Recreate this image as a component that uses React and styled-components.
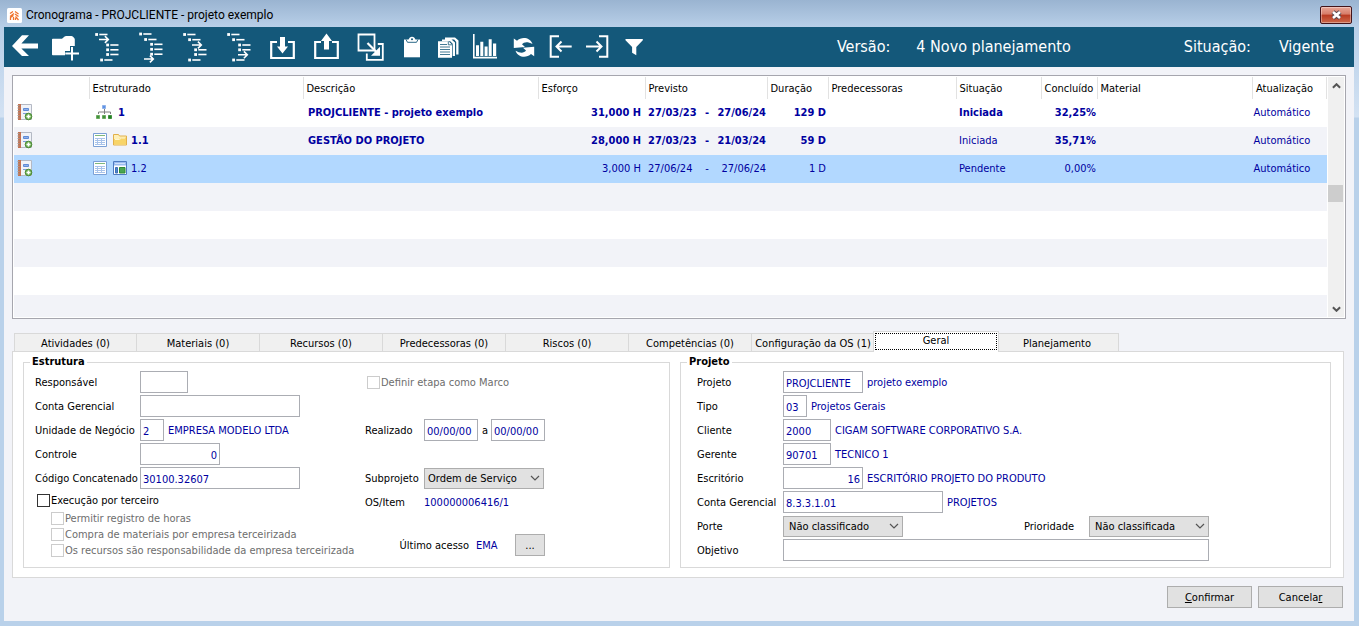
import React from 'react';
import styled, { createGlobalStyle, ThemeProvider } from 'styled-components';

const theme = {
  colors: {
    frame: '#b9d1ea',
    toolbar: '#14587a',
    surface: '#f2f3f8',
    white: '#ffffff',
    black: '#000000',
    value: '#0000a0',
    selected: '#b2d8ff',
    control: '#e1e1e1',
    border: '#adadad',
    line: '#d9d9d9',
    disabled: '#6d6d6d',
  },
};

const GlobalStyle = createGlobalStyle`
  * {
    box-sizing: border-box;
  }
  body {
    margin: 0;
    font-family: 'DejaVu Sans Condensed', 'DejaVu Sans', sans-serif;
    font-size: 11px;
    line-height: 14px;
    color: #000000;
  }
  button, input, select {
    font: inherit;
    color: inherit;
    margin: 0;
  }
`;

const Window = styled.div`
  display: flex;
  flex-direction: column;
  min-height: 100vh;
  padding: 0 5px 5px 4px;
  background: linear-gradient(#9ab4d1 0, #b8cfe8 27px, #d3e2f3 117px, ${({ theme }) => theme.colors.frame} 118px);
`;

const TitleBar = styled.header`
  display: flex;
  align-items: center;
  height: 27px;
  padding: 3px 0 0 3px;
  gap: 4px;
`;

const Title = styled.h1`
  flex: 1;
  margin: 0;
  font-family: Roboto, 'Open Sans', sans-serif;
  font-size: 12px;
  font-weight: normal;
`;

const CloseButton = styled.button`
  display: flex;
  align-items: center;
  justify-content: center;
  width: 32px;
  height: 18px;
  margin-right: 2px;
  padding: 0;
  border: 1px solid #43141a;
  border-radius: 2px;
  background: linear-gradient(#e9a798 0, #d67c68 45%, #b93a21 50%, #cc6a4c 100%);
  box-shadow: inset 0 0 0 1px rgba(255, 255, 255, 0.35);
`;

const Toolbar = styled.nav`
  display: flex;
  align-items: center;
  height: 40px;
  padding: 0 20px 0 5px;
  background-color: ${({ theme }) => theme.colors.toolbar};
  color: ${({ theme }) => theme.colors.white};
`;

const ToolButton = styled.button`
  flex: none;
  width: ${({ $width }) => $width}px;
  height: 40px;
  padding: 0;
  border: none;
  background: transparent;
  cursor: pointer;
  &:hover {
    opacity: 0.8;
  }
  svg {
    display: block;
  }
`;

const Status = styled.dl`
  display: flex;
  align-items: center;
  gap: ${({ $gap }) => $gap}px;
  margin: 0 0 0 ${({ $push }) => $push};
  font-size: 16px;
  line-height: 20px;
  white-space: nowrap;
  dt, dd {
    margin: 0;
  }
`;

const Body = styled.main`
  display: flex;
  flex-direction: column;
  flex: 1;
  padding: 8px 8px 13px;
  background-color: ${({ theme }) => theme.colors.surface};
`;

const GridBox = styled.section`
  display: flex;
  flex: 1 0 0;
  min-height: 200px;
  padding: 1px;
  gap: 1px;
  overflow: hidden;
  border: 1px solid #a6a6ae;
  background-color: ${({ theme }) => theme.colors.white};
`;

const GridScroll = styled.div`
  flex: 1;
  height: 0;
  min-height: 100%;
  overflow: hidden;
`;

const Table = styled.table`
  width: 100%;
  table-layout: fixed;
  border-collapse: collapse;
  white-space: nowrap;
`;

const HeadCell = styled.th`
  height: 22px;
  padding: 2px 0 0 3px;
  border-right: 1px solid #e2e2e2;
  font-weight: normal;
  text-align: left;
`;

const BodyRow = styled.tr`
  height: 28px;
  color: ${({ theme }) => theme.colors.value};
  font-weight: ${({ $bold }) => ($bold ? 'bold' : 'normal')};
  background-color: ${({ theme, $selected, $striped }) =>
    $selected ? theme.colors.selected : $striped ? theme.colors.surface : theme.colors.white};
`;

const Cell = styled.td`
  padding: 0 ${({ $right }) => $right || 0}px 0 ${({ $left }) => $left || 0}px;
  text-align: ${({ $align }) => $align || 'left'};
  font-weight: ${({ $plain }) => ($plain ? 'normal' : 'inherit')};
  svg {
    display: block;
    margin-bottom: 2px;
  }
`;

const Structure = styled.div`
  display: flex;
  align-items: center;
  gap: 4px;
  padding-left: ${({ $root }) => ($root ? 7 : 4)}px;
`;

const Period = styled.div`
  display: flex;
  justify-content: space-between;
`;

const ScrollTrack = styled.div`
  display: flex;
  flex-direction: column;
  width: 16px;
  background-color: #f0f0f0;
`;

const ScrollButton = styled.button`
  display: flex;
  align-items: center;
  justify-content: center;
  height: 17px;
  padding: 0;
  border: none;
  background: transparent;
`;

const ScrollSpace = styled.div`
  flex: ${({ $share }) => $share};
`;

const ScrollThumb = styled.div`
  height: 17px;
  margin-right: 1px;
  background-color: #cdcdcd;
`;

const TabList = styled.div`
  display: flex;
  align-items: flex-end;
  height: 20px;
  margin-top: 12px;
  padding-left: 2px;
`;

const Tab = styled.button`
  width: 123px;
  height: 18px;
  padding: 2px 0 0;
  border: 1px solid ${({ theme }) => theme.colors.line};
  border-width: 1px 1px 0 0;
  background-color: #f0f0f0;
  white-space: nowrap;
  line-height: 14px;
  &:first-child {
    border-left-width: 1px;
  }
  &[aria-selected='true'] {
    position: relative;
    width: 126px;
    height: 21px;
    margin: 0 -3px -1px -2px;
    padding: 1px 1px 2px;
    border-left-width: 1px;
    background-color: ${({ theme }) => theme.colors.white};
  }
  &[aria-selected='true'] span {
    display: block;
    height: 17px;
    border: 1px dotted #000000;
  }
`;

const Panel = styled.section`
  display: grid;
  grid-template-columns: 647fr 651fr;
  gap: 10px;
  margin-right: 2px;
  padding: 3px 12px 9px 10px;
  border: 1px solid ${({ theme }) => theme.colors.line};
  background-color: ${({ theme }) => theme.colors.white};
`;

const Group = styled.fieldset`
  display: flex;
  min-width: 0;
  min-height: 213px;
  margin: 0;
  padding: 1px 11px 0 ${({ $indent }) => $indent}px;
  border: 1px solid ${({ theme }) => theme.colors.line};
  legend {
    margin-left: ${({ $indent }) => 6 - $indent}px;
    padding: 0 2px;
    font-weight: bold;
  }
`;

const Column = styled.div`
  display: flex;
  flex-direction: column;
  flex: none;
  width: ${({ $width }) => $width}px;
`;

const Row = styled.div`
  display: flex;
  align-items: center;
  height: 24px;
  margin-top: ${({ $space }) => $space || 0}px;
  white-space: nowrap;
`;

const Label = styled.label`
  flex: none;
  width: ${({ $width }) => ($width ? `${$width}px` : 'auto')};
  padding-top: 2px;
`;

const Value = styled.output`
  min-width: ${({ $width }) => $width || 0}px;
  padding-top: 2px;
  color: ${({ theme }) => theme.colors.value};
`;

const TextInput = styled.input`
  width: ${({ $width }) => $width}px;
  height: 22px;
  padding: 2px 2px 0;
  border: 1px solid #abadb3;
  background-color: ${({ theme }) => theme.colors.white};
  color: ${({ theme }) => theme.colors.value};
  text-align: ${({ $align }) => $align || 'left'};
  & + output, & + label {
    margin-left: 4px;
  }
`;

const SelectBox = styled.div`
  position: relative;
  width: 120px;
  svg {
    position: absolute;
    top: 7px;
    right: 4px;
    pointer-events: none;
  }
`;

const SelectInput = styled.select`
  display: block;
  width: 100%;
  height: 21px;
  padding: 1px 16px 0 ${({ $indent }) => $indent}px;
  appearance: none;
  border: 1px solid ${({ theme }) => theme.colors.border};
  border-radius: 0;
  background-color: ${({ theme }) => theme.colors.control};
`;

const CheckLabel = styled.label`
  display: flex;
  align-items: center;
  height: ${({ $height }) => $height}px;
  margin-left: ${({ $left }) => $left}px;
  color: ${({ theme, $disabled }) => ($disabled ? theme.colors.disabled : theme.colors.black)};
  white-space: nowrap;
  span {
    padding-top: 2px;
  }
`;

const CheckInput = styled.input.attrs({ type: 'checkbox' })`
  width: 13px;
  height: 13px;
  margin-right: 1px;
  appearance: none;
  border: 1px solid #333333;
  background-color: ${({ theme }) => theme.colors.white};
  &:disabled {
    border-color: #cccccc;
  }
  &:checked {
    background-color: #333333;
  }
`;

const PushButton = styled.button`
  width: ${({ $width }) => $width}px;
  height: 22px;
  padding: 1px 0 0;
  border: 1px solid ${({ theme }) => theme.colors.border};
  background-color: ${({ theme }) => theme.colors.control};
`;

const AccessRow = styled(Row)`
  justify-content: flex-end;
  gap: 7px;
`;

const Spread = styled.div`
  flex: 1;
`;

const Footer = styled.footer`
  display: flex;
  justify-content: flex-end;
  gap: 6px;
  margin: 8px 3px 0 0;
`;

/* toolbar drawings, all on a 40px high canvas */

function IndentMarks({ rows, arrow }) {
  return (
    <g stroke="#fff" strokeWidth="1.6" fill="none">
      {rows.map(([x, y]) => (
        <g key={y}>
          <path d={`M${x - 1.3} ${y}h2.8`} strokeWidth="2.8" />
          <path d={`M${x + 2.8} ${y}h8.2`} />
        </g>
      ))}
      <path d={`M${arrow[0]} ${arrow[1]}h9.5m-3.6 -3.4l3.4 3.4l-3.4 3.4`} />
    </g>
  );
}

const tools = [
  {
    name: 'Voltar',
    width: 36,
    art: <path fill="#fff" d="M3 19L13 8.3h7L12.4 16.5H29v5H12.4L20 29h-7z" />,
  },
  {
    name: 'Nova etapa',
    width: 40,
    art: (
      <g>
        <path fill="#fff" d="M7 12.5q0-.8.8-.8H17l2.600-2.200q.6-.4 1.400-.4h5.400q1 0 1.600.6l1.200 1.400q.6.600.6 1.400V19H25v5h-5v4.300H7.800q-.8 0-.8-.8z" />
        <path stroke="#fff" strokeWidth="2" d="M27 20v13.500M20.300 26.500H34" />
      </g>
    ),
  },
  {
    name: 'Mover acima',
    width: 44,
    art: <IndentMarks rows={[[11.5, 7.5], [22.5, 18], [22.5, 22.8], [22.5, 27.5], [16.5, 33]]} arrow={[14, 12.5]} />,
  },
  {
    name: 'Mover abaixo',
    width: 44,
    art: <IndentMarks rows={[[11.5, 7], [16.5, 12.5], [22.5, 17.3], [22.5, 22.3], [22.5, 27.2]]} arrow={[15, 32]} />,
  },
  {
    name: 'Recuar',
    width: 44,
    art: <IndentMarks rows={[[11.5, 7.5], [16.5, 12.7], [22.5, 22.8], [22.5, 27.5], [16.5, 33]]} arrow={[19, 18]} />,
  },
  {
    name: 'Avançar',
    width: 44,
    art: <IndentMarks rows={[[11.5, 7.5], [16.5, 12.7], [22.5, 18], [22.5, 22.8], [16.5, 33]]} arrow={[21, 27.8]} />,
  },
  {
    name: 'Importar',
    width: 44,
    art: (
      <g>
        <path fill="none" stroke="#fff" strokeWidth="2.2" d="M16 15h-5.800v16h22.600V15H27" />
        <path fill="#fff" d="M19 10h5v9.500h3L21.500 26.500 16 19.500h3z" />
      </g>
    ),
  },
  {
    name: 'Exportar',
    width: 44,
    art: (
      <g>
        <path fill="none" stroke="#fff" strokeWidth="2.2" d="M16 15h-5.800v16h22.600V15H27" />
        <path fill="#fff" d="M19 22.500h5V14h3L21.500 6.500 16 14h3z" />
      </g>
    ),
  },
  {
    name: 'Transferir',
    width: 44,
    art: (
      <g fill="none" stroke="#fff" strokeWidth="1.8">
        <path d="M9.500 7.500h16v16h-16zM17.800 26.500v6.300h16V17h-5" />
        <path strokeWidth="2.2" d="M18.500 16l9 9" />
        <path fill="#fff" stroke="none" d="M31 19.800v9h-9z" />
      </g>
    ),
  },
  {
    name: 'Colar',
    width: 37,
    art: (
      <g>
        <path fill="#fff" d="M11 12.500h16v17.800H11z" />
        <path fill="#fff" d="M15.500 13q1-3.200 3.500-3.200t3.500 3.200z" />
        <path fill="none" stroke="#14587a" strokeWidth="0.9" d="M13 12.500l1.500 2.800h9l1.500-2.800" />
        <circle cx="19" cy="12.300" r="1" fill="#14587a" />
      </g>
    ),
  },
  {
    name: 'Copiar',
    width: 37,
    art: (
      <g fill="#fff">
        <path d="M15 10.500h10l3.500 3v14h-2.300V15l-2-2.600H15zM12 12.500h9.500l3.500 3V29h-2.300V16.800l-2.500-2.500H12z" />
        <path d="M8 14.300h10.500l3.500 3.200v13.200H8z" />
        <path stroke="#14587a" strokeWidth="0.8" d="M10 17.500h7M10 20h10M10 22.500h10M10 25h10M10 27.500h10M18.300 14.500v3.300h3.700" fill="none" />
      </g>
    ),
  },
  {
    name: 'Gráfico',
    width: 37,
    art: (
      <g fill="#fff">
        <path d="M6 7h1.600v22.800H30v1.600H6z" />
        <path d="M9 18.300h3V29H9zM13.300 14.800h3V29h-3zM17.600 19.500h3V29h-3zM21.700 12.300h3V29h-3zM26 16.500h3.200V29H26z" />
      </g>
    ),
  },
  {
    name: 'Atualizar',
    width: 37,
    art: (
      <g fill="#fff">
        <path d="M9.800 11.500l3.200 2.200C17.500 9.300 26 10 28.500 17C24 14.500 20 14.500 18 17.300l3 2.700L9.800 21z" />
        <path d="M30.200 29.300L27 27.100C22.500 31.500 14 30.800 11.500 23.800C16 26.300 20 26.300 22 23.500L19 20.800L30.200 19.800z" />
      </g>
    ),
  },
  {
    name: 'Início',
    width: 37,
    art: (
      <g fill="none" stroke="#fff" strokeWidth="2">
        <path d="M18 9.300H9.700v20.400H18" />
        <path d="M30.700 19.500H15.500M20.500 14.500l-5 5l5 5" />
      </g>
    ),
  },
  {
    name: 'Fim',
    width: 37,
    art: (
      <g fill="none" stroke="#fff" strokeWidth="2">
        <path d="M21 9.300h8.300v20.400H21" />
        <path d="M8 19.500h15.500M18.500 14.500l5 5l-5 5" />
      </g>
    ),
  },
  {
    name: 'Filtrar',
    width: 37,
    art: <path fill="#fff" d="M10.500 12h17.300v1.300L21.300 20v8.300l-4.200-2.600V20l-6.600-6.700z" />,
  },
];

/* row icons */

function LogIcon() {
  return (
    <svg width="16" height="17" viewBox="0 0 16 17">
      <path d="M2.500.5h12v15h-12z" fill="#f1f3f8" stroke="#b4b9c4" />
      <path d="M1 0h3v16H1z" fill="#c4714f" />
      <path d="M.5 1.500h2M.5 4h2M.5 6.500h2M.5 9h2M.5 11.500h2M.5 14h2" stroke="#a39b98" />
      <path d="M6.500 4.500h5v2h-5z" fill="#8fb1ea" stroke="#5f8bd6" />
      <path d="M6 9.500h5" stroke="#7f9fd8" />
      <circle cx="11.500" cy="12.500" r="3.300" fill="#6cae50" stroke="#4b8a35" />
      <path d="M9.500 12.500h4M11.500 10.500v4" stroke="#fff" strokeWidth="1.6" />
    </svg>
  );
}

function TreeIcon() {
  return (
    <svg width="18" height="16" viewBox="0 0 18 16">
      <path d="M8.500 5v3M2.500 10V8h12v2M8.500 8v2" fill="none" stroke="#808080" />
      <path d="M6.500 1.500h3v3h-3z" fill="#5f93e6" stroke="#8fb2ea" />
      <path d="M.5 11.500h3v3h-3z" fill="#3f9140" stroke="#6dab5d" />
      <path d="M6.500 11.500h3v3h-3z" fill="#3f9140" stroke="#6dab5d" />
      <path d="M12.500 11.500h3v3h-3z" fill="#237f25" stroke="#3f923c" />
    </svg>
  );
}

function SheetIcon() {
  return (
    <svg width="16" height="16" viewBox="0 0 16 16">
      <path d="M.5 1.500h13v13H.5z" fill="#fff" stroke="#7ba0d6" />
      <path d="M2 3.500h10" stroke="#7fb87c" />
      <path d="M2 6.500h10M2 8.500h10M2 10.500h10M2 12.500h10M4.500 6v7M8.500 6v7" stroke="#a9c3ea" fill="none" />
    </svg>
  );
}

function FolderIcon() {
  return (
    <svg width="14" height="16" viewBox="0 0 14 16">
      <path d="M.5 2.500h5l1 1.500h7v9H.5z" fill="#fff0b8" stroke="#e2b04a" />
      <path d="M1 7h5l2-1.500h5V12.500H1z" fill="#f8d468" />
      <path d="M2 7.500h4.500l2-1.500H12" stroke="#fff6d0" fill="none" />
    </svg>
  );
}

function LayoutIcon() {
  return (
    <svg width="14" height="16" viewBox="0 0 14 16">
      <path d="M.5 1.500h13v13H.5z" fill="#fff" stroke="#4f7cc0" />
      <path d="M1 2h12v3.500H1z" fill="#9bbcf0" />
      <path d="M2 3.500h10" stroke="#cfe0fa" />
      <path d="M2.500 7.500h2v5.500h-2z" fill="#4c86d0" stroke="#3f6fb5" />
      <path d="M6.500 7.500h5.500v5.500H6.500z" fill="#4aa550" stroke="#2f8a34" />
    </svg>
  );
}

function Chevron({ up, size = 10 }) {
  return (
    <svg width={size} height="6" viewBox="0 0 10 6">
      <path d={up ? 'M1 5l4-4 4 4' : 'M1 1l4 4 4-4'} fill="none" stroke="#555" strokeWidth={size > 9 ? 1.2 : 2.2} />
    </svg>
  );
}

const columns = [
  { name: '', width: 75 },
  { name: 'Estruturado', width: 214 },
  { name: 'Descrição', width: 235 },
  { name: 'Esforço', width: 107 },
  { name: 'Previsto', width: 122 },
  { name: 'Duração', width: 61 },
  { name: 'Predecessoras', width: 128 },
  { name: 'Situação', width: 85 },
  { name: 'Concluído', width: 56 },
  { name: 'Material' },
  { name: 'Atualização', width: 74 },
];

const steps = [
  {
    code: '1',
    root: true,
    bold: true,
    icons: <TreeIcon />,
    description: 'PROJCLIENTE - projeto exemplo',
    effort: '31,000 H',
    from: '27/03/23',
    to: '27/06/24',
    duration: '129 D',
    status: 'Iniciada',
    done: '32,25%',
  },
  {
    code: '1.1',
    bold: true,
    plainStatus: true,
    icons: <><SheetIcon /><FolderIcon /></>,
    description: 'GESTÃO DO PROJETO',
    effort: '28,000 H',
    from: '27/03/23',
    to: '21/03/24',
    duration: '59 D',
    status: 'Iniciada',
    done: '35,71%',
  },
  {
    code: '1.2',
    selected: true,
    icons: <><SheetIcon /><LayoutIcon /></>,
    description: '',
    effort: '3,000 H',
    from: '27/06/24',
    to: '27/06/24',
    duration: '1 D',
    status: 'Pendente',
    done: '0,00%',
  },
];

const tabs = [
  'Atividades (0)',
  'Materiais (0)',
  'Recursos (0)',
  'Predecessoras (0)',
  'Riscos (0)',
  'Competências (0)',
  'Configuração da OS (1)',
  'Geral',
  'Planejamento',
];

function Field({ id, label, labelWidth, width, value = '', align, children }) {
  return (
    <Row>
      <Label htmlFor={id} $width={labelWidth}>{label}</Label>
      <TextInput id={id} $width={width} $align={align} defaultValue={value} />
      {children}
    </Row>
  );
}

function Select({ id, value, indent }) {
  return (
    <SelectBox>
      <SelectInput id={id} $indent={indent} defaultValue={value}>
        <option>{value}</option>
      </SelectInput>
      <Chevron />
    </SelectBox>
  );
}

function Check({ label, disabled, height, left }) {
  return (
    <CheckLabel $disabled={disabled} $height={height} $left={left}>
      <CheckInput disabled={disabled} />
      <span>{label}</span>
    </CheckLabel>
  );
}

function StepGrid() {
  return (
    <GridBox>
      <GridScroll>
        <Table>
          <colgroup>
            {columns.map((c) => <col key={c.name} width={c.width} />)}
          </colgroup>
          <thead>
            <tr>
              {columns.map((c) => <HeadCell key={c.name}>{c.name}</HeadCell>)}
            </tr>
          </thead>
          <tbody>
            {steps.map((s, i) => (
              <BodyRow key={s.code} $bold={s.bold} $selected={s.selected} $striped={i % 2 === 1}>
                <Cell $left={3}><LogIcon /></Cell>
                <Cell>
                  <Structure $root={s.root}>{s.icons}<span>{s.code}</span></Structure>
                </Cell>
                <Cell $left={5}>{s.description}</Cell>
                <Cell $align="right" $right={4}>{s.effort}</Cell>
                <Cell $left={3} $right={1}>
                  <Period><span>{s.from}</span><span>-</span><span>{s.to}</span></Period>
                </Cell>
                <Cell $align="right" $right={2}>{s.duration}</Cell>
                <Cell />
                <Cell $left={3} $plain={s.plainStatus}>{s.status}</Cell>
                <Cell $align="right" $right={1}>{s.done}</Cell>
                <Cell />
                <Cell $left={1} $plain>Automático</Cell>
              </BodyRow>
            ))}
            {[3, 4, 5, 6, 7].map((i) => (
              <BodyRow key={i} $striped={i % 2 === 1}>
                <Cell colSpan={columns.length} />
              </BodyRow>
            ))}
          </tbody>
        </Table>
      </GridScroll>
      <ScrollTrack>
        <ScrollButton aria-label="Rolar para cima"><Chevron up size={9} /></ScrollButton>
        <ScrollSpace $share={48} />
        <ScrollThumb />
        <ScrollSpace $share={52} />
        <ScrollButton aria-label="Rolar para baixo"><Chevron size={9} /></ScrollButton>
      </ScrollTrack>
    </GridBox>
  );
}

function StructureGroup() {
  return (
    <Group $indent={11}>
      <legend>Estrutura</legend>
      <Column $width={330}>
        <Field id="responsavel" label="Responsável" labelWidth={105} width={48} />
        <Field id="conta" label="Conta Gerencial" labelWidth={105} width={160} />
        <Field id="unidade" label="Unidade de Negócio" labelWidth={105} width={24} value="2">
          <Value>EMPRESA MODELO LTDA</Value>
        </Field>
        <Field id="controle" label="Controle" labelWidth={105} width={80} value="0" align="right" />
        <Field id="codigo" label="Código Concatenado" labelWidth={105} width={160} value="30100.32607" />
        <Check label="Execução por terceiro" height={20} left={2} />
        <Check label="Permitir registro de horas" height={16} left={16} disabled />
        <Check label="Compra de materiais por empresa terceirizada" height={16} left={16} disabled />
        <Check label="Os recursos são responsabilidade da empresa terceirizada" height={16} left={16} disabled />
      </Column>
      <Column $width={180}>
        <Check label="Definir etapa como Marco" height={24} left={2} disabled />
        <Row $space={24}>
          <Label htmlFor="realizado" $width={59}>Realizado</Label>
          <TextInput id="realizado" $width={54} defaultValue="00/00/00" />
          <Label htmlFor="realizado-fim">a</Label>
          <Spread />
          <TextInput id="realizado-fim" $width={54} defaultValue="00/00/00" />
        </Row>
        <Row $space={24}>
          <Label htmlFor="subprojeto" $width={59}>Subprojeto</Label>
          <Select id="subprojeto" value="Ordem de Serviço" indent={3} />
        </Row>
        <Row>
          <Label htmlFor="os-item" $width={59}>OS/Item</Label>
          <Value id="os-item">100000006416/1</Value>
        </Row>
        <AccessRow $space={19}>
          <Label htmlFor="ultimo-acesso">Último acesso</Label>
          <Value id="ultimo-acesso" $width={32}>EMA</Value>
          <PushButton $width={30}>...</PushButton>
        </AccessRow>
      </Column>
    </Group>
  );
}

function ProjectGroup() {
  return (
    <Group $indent={16}>
      <legend>Projeto</legend>
      <Column $width={512}>
        <Field id="projeto" label="Projeto" labelWidth={86} width={80} value="PROJCLIENTE">
          <Value>projeto exemplo</Value>
        </Field>
        <Field id="tipo" label="Tipo" labelWidth={86} width={24} value="03">
          <Value>Projetos Gerais</Value>
        </Field>
        <Field id="cliente" label="Cliente" labelWidth={86} width={48} value="2000">
          <Value>CIGAM SOFTWARE CORPORATIVO S.A.</Value>
        </Field>
        <Field id="gerente" label="Gerente" labelWidth={86} width={48} value="90701">
          <Value>TECNICO 1</Value>
        </Field>
        <Field id="escritorio" label="Escritório" labelWidth={86} width={80} value="16" align="right">
          <Value>ESCRITÓRIO PROJETO DO PRODUTO</Value>
        </Field>
        <Field id="conta-projeto" label="Conta Gerencial" labelWidth={86} width={160} value="8.3.3.1.01">
          <Value>PROJETOS</Value>
        </Field>
        <Row>
          <Label htmlFor="porte" $width={86}>Porte</Label>
          <Select id="porte" value="Não classificado" indent={5} />
          <Spread />
          <Label htmlFor="prioridade" $width={65}>Prioridade</Label>
          <Select id="prioridade" value="Não classificada" indent={5} />
        </Row>
        <Field id="objetivo" label="Objetivo" labelWidth={86} width={426} />
      </Column>
    </Group>
  );
}

function App() {
  const [activeTab, setActiveTab] = React.useState('Geral');

  return (
    <ThemeProvider theme={theme}>
      <GlobalStyle />
      <Window>
        <TitleBar>
          <svg width="15" height="15" viewBox="0 0 15 15">
            <rect width="15" height="15" rx="1.5" fill="#fff" />
            <path d="M3 5.500l3-2M3 8.500l4-3M3.500 12V9.500l3-2M6.500 12V9M8 3.500L11.500 6M8 6l3.500 2.500M8.500 8.500l3 3.500M8.500 10v2" stroke="#f0722c" strokeWidth="1.3" fill="none" />
          </svg>
          <Title>Cronograma - PROJCLIENTE - projeto exemplo</Title>
          <CloseButton aria-label="Fechar">
            <svg width="13" height="10" viewBox="0 0 13 10">
              <path d="M3 2l7 6M10 2l-7 6" stroke="#5a4a50" strokeWidth="4.6" />
              <path d="M3 2l7 6M10 2l-7 6" stroke="#fff" strokeWidth="2.6" />
            </svg>
          </CloseButton>
        </TitleBar>
        <Toolbar>
          {tools.map((tool) => (
            <ToolButton key={tool.name} aria-label={tool.name} $width={tool.width}>
              <svg width={tool.width} height="40" viewBox={`0 0 ${tool.width} 40`}>{tool.art}</svg>
            </ToolButton>
          ))}
          <Status $gap={26} $push="auto">
            <dt>Versão:</dt>
            <dd>4 Novo planejamento</dd>
          </Status>
          <Status $gap={28} $push="113px">
            <dt>Situação:</dt>
            <dd>Vigente</dd>
          </Status>
        </Toolbar>
        <Body>
          <StepGrid />
          <TabList role="tablist">
            {tabs.map((tab) => (
              <Tab key={tab} role="tab" aria-selected={tab === activeTab} onClick={() => setActiveTab(tab)}>
                <span>{tab}</span>
              </Tab>
            ))}
          </TabList>
          <Panel>
            <StructureGroup />
            <ProjectGroup />
          </Panel>
          <Footer>
            <PushButton $width={85}><u>C</u>onfirmar</PushButton>
            <PushButton $width={85}>Cancela<u>r</u></PushButton>
          </Footer>
        </Body>
      </Window>
    </ThemeProvider>
  );
}

export default App;
